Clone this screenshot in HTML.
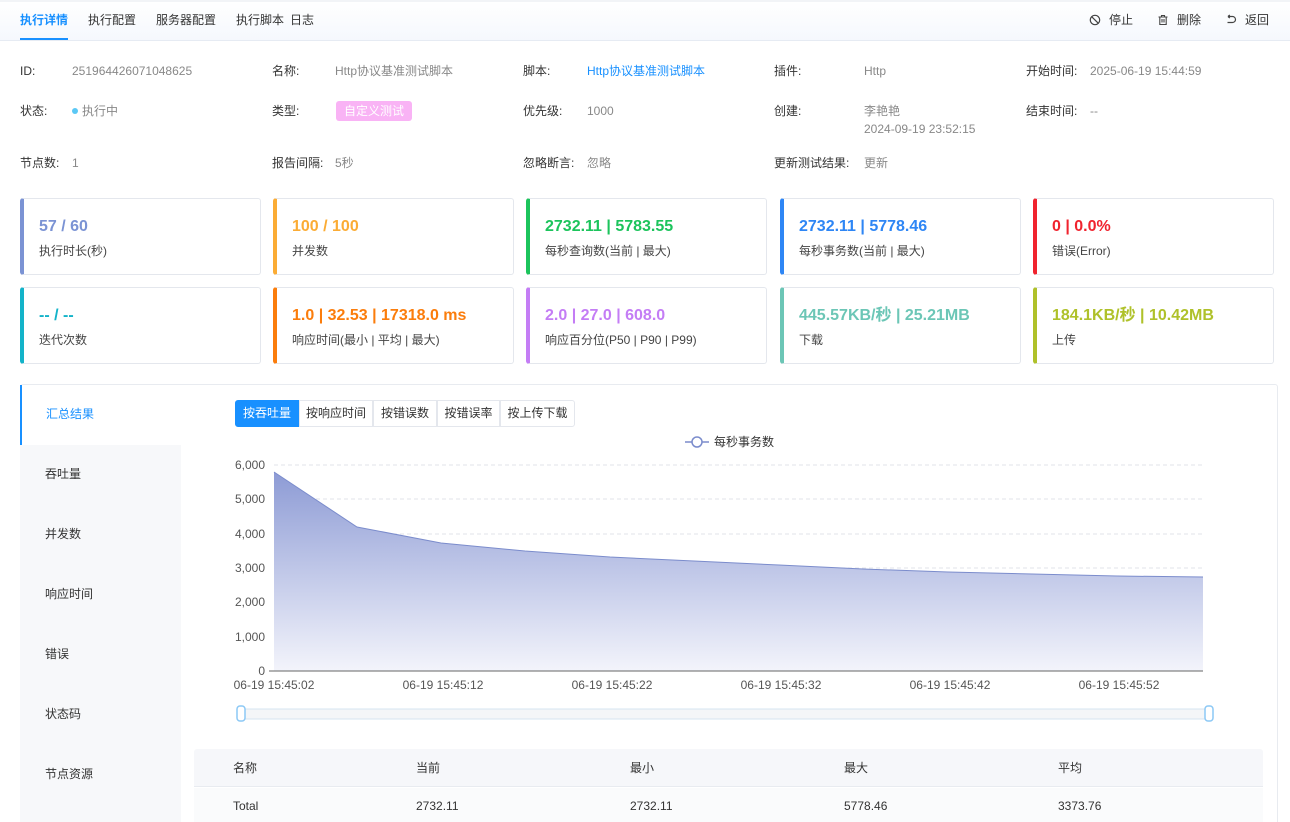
<!DOCTYPE html>
<html><head><meta charset="utf-8"><style>
*{box-sizing:border-box;margin:0;padding:0}
html,body{width:1290px;height:822px;overflow:hidden}
body{background:#fff;font-family:"Liberation Sans","Noto Sans CJK SC",sans-serif;font-size:12px;line-height:14px;color:#333;position:relative}
.abs{position:absolute}
.top{position:absolute;left:0;top:0;width:1290px;height:41px;background:linear-gradient(#fff,#f5f8fd);border-bottom:1px solid #e6ebf3;border-top:2px solid #f2f4f7}
.tab{position:absolute;top:13px;font-size:12px;line-height:14px;color:#333}
.lbl{position:absolute;font-size:12px;color:#333;line-height:14px}
.val{position:absolute;font-size:12px;color:#888;line-height:14px}
.card{position:absolute;width:241px;height:77px;border:1px solid #e4e7ed;border-radius:3px;border-left-width:4px}
.card .n{position:absolute;left:15px;top:19px;font-size:16px;line-height:18px;font-weight:bold;white-space:nowrap}
.card .t{position:absolute;left:15px;top:45px;font-size:12px;line-height:14px;color:#444}
.side{position:absolute;left:20px;width:161px;height:60px;background:#f7f8fa;font-size:12px;color:#333;padding:22px 0 0 25px}
.btn{position:absolute;top:400px;height:27px;border:1px solid #e4e7ed;font-size:12px;color:#333;line-height:25px;text-align:center}
.th{position:absolute;top:761px;font-size:12px;color:#333}
.td{position:absolute;top:799px;font-size:12px;color:#333}
</style></head><body>
<div class="top"></div>
<div class="tab" style="left:20px;color:#1890ff;font-weight:bold">执行详情</div>
<div class="abs" style="left:20px;top:38px;width:48px;height:2px;background:#1890ff"></div>
<div class="tab" style="left:88px">执行配置</div>
<div class="tab" style="left:156px">服务器配置</div>
<div class="tab" style="left:236px">执行脚本</div>
<div class="tab" style="left:290px">日志</div>
<svg class="abs" style="left:1089px;top:14px" width="12" height="12" viewBox="0 0 12 12"><circle cx="6" cy="6" r="4.7" fill="none" stroke="#444" stroke-width="1.2"/><line x1="2.8" y1="2.8" x2="9.2" y2="9.2" stroke="#444" stroke-width="1.2"/></svg>
<div class="tab" style="left:1109px">停止</div>
<svg class="abs" style="left:1157px;top:14px" width="12" height="12" viewBox="0 0 12 12"><path d="M1.5 3h9M4.5 3V1.5h3V3M2.8 3v7.5h6.4V3M5 5v3.5M7 5v3.5" fill="none" stroke="#444" stroke-width="1.1"/></svg>
<div class="tab" style="left:1177px">删除</div>
<svg class="abs" style="left:1225px;top:14px" width="12" height="12" viewBox="0 0 12 12"><path d="M3 2.5h4.5a3 3 0 0 1 0 6H2.5M3 2.5l1.8-1.6M3 2.5l1.8 1.6" fill="none" stroke="#444" stroke-width="1.2"/></svg>
<div class="tab" style="left:1245px">返回</div>

<div class="lbl" style="left:20px;top:64px">ID:</div><div class="val" style="left:72px;top:64px">251964426071048625</div>
<div class="lbl" style="left:272px;top:64px">名称:</div><div class="val" style="left:335px;top:64px">Http协议基准测试脚本</div>
<div class="lbl" style="left:523px;top:64px">脚本:</div><div class="val" style="left:587px;top:64px;color:#1890ff">Http协议基准测试脚本</div>
<div class="lbl" style="left:774px;top:64px">插件:</div><div class="val" style="left:864px;top:64px">Http</div>
<div class="lbl" style="left:1026px;top:64px">开始时间:</div><div class="val" style="left:1090px;top:64px">2025-06-19 15:44:59</div>

<div class="lbl" style="left:20px;top:104px">状态:</div><div class="abs" style="left:72px;top:108px;width:6px;height:6px;border-radius:50%;background:#5bc8f5"></div><div class="val" style="left:82px;top:104px">执行中</div>
<div class="lbl" style="left:272px;top:104px">类型:</div><div class="abs" style="left:336px;top:101px;width:76px;height:20px;background:#f9b3f5;border-radius:3px;color:#fff;font-size:12px;line-height:20px;text-align:center">自定义测试</div>
<div class="lbl" style="left:523px;top:104px">优先级:</div><div class="val" style="left:587px;top:104px">1000</div>
<div class="lbl" style="left:774px;top:104px">创建:</div><div class="val" style="left:864px;top:104px">李艳艳</div><div class="val" style="left:864px;top:122px">2024-09-19 23:52:15</div>
<div class="lbl" style="left:1026px;top:104px">结束时间:</div><div class="val" style="left:1090px;top:104px">--</div>

<div class="lbl" style="left:20px;top:156px">节点数:</div><div class="val" style="left:72px;top:156px">1</div>
<div class="lbl" style="left:272px;top:156px">报告间隔:</div><div class="val" style="left:335px;top:156px">5秒</div>
<div class="lbl" style="left:523px;top:156px">忽略断言:</div><div class="val" style="left:587px;top:156px">忽略</div>
<div class="lbl" style="left:774px;top:156px">更新测试结果:</div><div class="val" style="left:864px;top:156px">更新</div>

<div class="card" style="left:20px;top:198px;border-left-color:#7b93d4"><div class="n" style="color:#7b93d4">57 / 60</div><div class="t">执行时长(秒)</div></div>
<div class="card" style="left:273px;top:198px;border-left-color:#fbac35"><div class="n" style="color:#fbac35">100 / 100</div><div class="t">并发数</div></div>
<div class="card" style="left:526px;top:198px;border-left-color:#1cc45c"><div class="n" style="color:#1cc45c">2732.11 | 5783.55</div><div class="t">每秒查询数(当前 | 最大)</div></div>
<div class="card" style="left:780px;top:198px;border-left-color:#2e86f5"><div class="n" style="color:#2e86f5">2732.11 | 5778.46</div><div class="t">每秒事务数(当前 | 最大)</div></div>
<div class="card" style="left:1033px;top:198px;border-left-color:#f0232e"><div class="n" style="color:#f0232e">0 | 0.0%</div><div class="t">错误(Error)</div></div>
<div class="card" style="left:20px;top:287px;border-left-color:#13b3c9"><div class="n" style="color:#13b3c9">-- / --</div><div class="t">迭代次数</div></div>
<div class="card" style="left:273px;top:287px;border-left-color:#fb7d0c"><div class="n" style="color:#fb7d0c">1.0 | 32.53 | 17318.0 ms</div><div class="t">响应时间(最小 | 平均 | 最大)</div></div>
<div class="card" style="left:526px;top:287px;border-left-color:#c47df5"><div class="n" style="color:#c47df5">2.0 | 27.0 | 608.0</div><div class="t">响应百分位(P50 | P90 | P99)</div></div>
<div class="card" style="left:780px;top:287px;border-left-color:#6cc6b6"><div class="n" style="color:#6cc6b6">445.57KB/秒 | 25.21MB</div><div class="t">下载</div></div>
<div class="card" style="left:1033px;top:287px;border-left-color:#afc12a"><div class="n" style="color:#afc12a">184.1KB/秒 | 10.42MB</div><div class="t">上传</div></div>

<div class="abs" style="left:20px;top:384px;width:1258px;height:450px;border:1px solid #e8ebf0;border-radius:3px"></div>
<div class="abs" style="left:20px;top:385px;width:161px;height:60px;background:#fff;border-left:2px solid #1890ff;color:#1890ff;padding:22px 0 0 24px">汇总结果</div>
<div class="side" style="top:445px">吞吐量</div>
<div class="side" style="top:505px">并发数</div>
<div class="side" style="top:565px">响应时间</div>
<div class="side" style="top:625px">错误</div>
<div class="side" style="top:685px">状态码</div>
<div class="side" style="top:745px;height:80px">节点资源</div>

<div class="btn" style="left:235px;width:64px;background:#1890ff;border-color:#1890ff;color:#fff;border-radius:3px 0 0 3px">按吞吐量</div>
<div class="btn" style="left:299px;width:74px">按响应时间</div>
<div class="btn" style="left:373px;width:64px">按错误数</div>
<div class="btn" style="left:437px;width:63px">按错误率</div>
<div class="btn" style="left:500px;width:75px;border-radius:0 3px 3px 0">按上传下载</div>

<svg class="abs" style="left:0;top:0" width="1290" height="822">
<defs><linearGradient id="g" x1="0" y1="0" x2="0" y2="1"><stop offset="0" stop-color="#8d9bd5"/><stop offset="1" stop-color="#f3f4fb"/></linearGradient></defs>
<line x1="685" y1="442" x2="709" y2="442" stroke="#7b8ccc" stroke-width="1.5"/><circle cx="697" cy="442" r="5" fill="#fff" stroke="#7b8ccc" stroke-width="1.5"/>
<text x="714" y="446" font-size="12" fill="#333" font-family="Liberation Sans,Noto Sans CJK SC,sans-serif">每秒事务数</text>
<g stroke="#e0e3ea" stroke-dasharray="4 3"><line x1="274" y1="465" x2="1203" y2="465"/><line x1="274" y1="499" x2="1203" y2="499"/><line x1="274" y1="534" x2="1203" y2="534"/><line x1="274" y1="568" x2="1203" y2="568"/><line x1="274" y1="602" x2="1203" y2="602"/><line x1="274" y1="637" x2="1203" y2="637"/></g>
<path d="M274 472L357 527L441 543L525 551L610 557L694 561L779 565L863 569L948 572L1032 574L1117 576L1203 577L1203 671L274 671Z" fill="url(#g)"/>
<path d="M274 472L357 527L441 543L525 551L610 557L694 561L779 565L863 569L948 572L1032 574L1117 576L1203 577" fill="none" stroke="#7b8ccc" stroke-width="1"/>
<line x1="269" y1="671" x2="1203" y2="671" stroke="#666"/>
<g font-size="12" fill="#555" text-anchor="end" font-family="Liberation Sans,sans-serif"><text x="265" y="469">6,000</text><text x="265" y="503">5,000</text><text x="265" y="538">4,000</text><text x="265" y="572">3,000</text><text x="265" y="606">2,000</text><text x="265" y="641">1,000</text><text x="265" y="675">0</text></g>
<g font-size="12" fill="#555" text-anchor="middle" font-family="Liberation Sans,sans-serif"><text x="274" y="689">06-19 15:45:02</text><text x="443" y="689">06-19 15:45:12</text><text x="612" y="689">06-19 15:45:22</text><text x="781" y="689">06-19 15:45:32</text><text x="950" y="689">06-19 15:45:42</text><text x="1119" y="689">06-19 15:45:52</text></g>
<rect x="241" y="709" width="968" height="10" fill="#f4f6f8" stroke="#d6e4f0"/>
<rect x="237" y="706" width="8" height="15" rx="3" fill="#fff" stroke="#8cc8f5" stroke-width="1.5"/>
<rect x="1205" y="706" width="8" height="15" rx="3" fill="#fff" stroke="#8cc8f5" stroke-width="1.5"/>
</svg>

<div class="abs" style="left:194px;top:749px;width:1069px;height:38px;background:#f6f7fa;border-bottom:1px solid #e8ebf0;border-radius:3px 3px 0 0"></div>
<div class="abs" style="left:194px;top:788px;width:1069px;height:34px;background:#fafbfc"></div>
<div class="th" style="left:233px">名称</div><div class="th" style="left:416px">当前</div><div class="th" style="left:630px">最小</div><div class="th" style="left:844px">最大</div><div class="th" style="left:1058px">平均</div>
<div class="td" style="left:233px">Total</div><div class="td" style="left:416px">2732.11</div><div class="td" style="left:630px">2732.11</div><div class="td" style="left:844px">5778.46</div><div class="td" style="left:1058px">3373.76</div>
</body></html>
